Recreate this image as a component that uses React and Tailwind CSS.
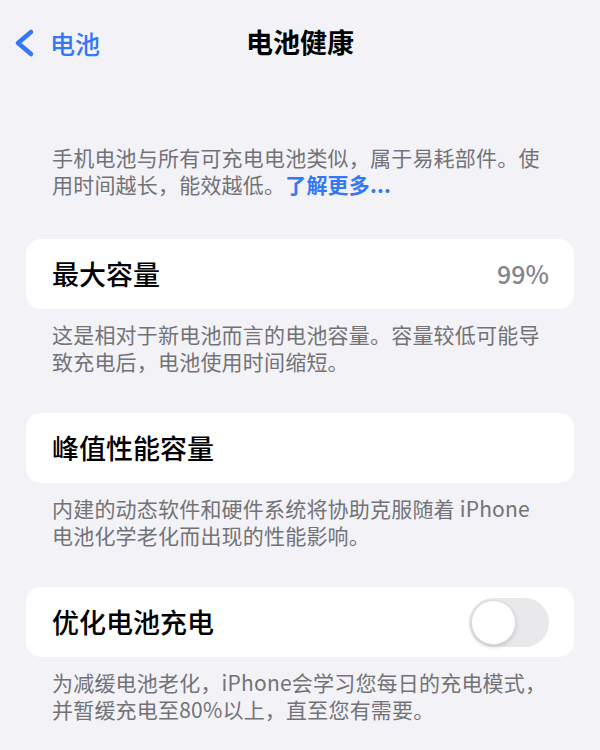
import React from 'react';

const cjk = { fontFamily: '"Noto Sans CJK SC", "Noto Sans", sans-serif' };

function Toggle({ on }) {
  return (
    <div
      className={`flex h-[49px] w-[80px] items-center rounded-full p-[2px] ${
        on ? 'justify-end bg-[#34c759]' : 'justify-start bg-[#e9e9eb]'
      }`}
    >
      <div className="h-[45px] w-[45px] rounded-full border border-[#dcdcde] bg-white shadow-[0_2px_4px_rgba(0,0,0,0.15)]" />
    </div>
  );
}

function Row({ label, value, toggle }) {
  return (
    <div className="flex h-[70px] items-center justify-between rounded-[15px] bg-white pl-[26px] pr-[25px]">
      <span className="text-[27px] font-medium text-black">{label}</span>
      {value && <span className="text-[25px] font-medium text-[#85858a]">{value}</span>}
      {toggle !== undefined && <Toggle on={toggle} />}
    </div>
  );
}

function Caption({ children }) {
  return (
    <p className="mt-[12px] px-[26px] text-[21px] leading-[27px] tracking-[0.2px] text-[#727277]">
      {children}
    </p>
  );
}

export default function App() {
  return (
    <div className="min-h-[750px] w-[600px] overflow-hidden bg-[#f2f2f7]" style={cjk}>
      <header className="relative flex h-[84px] items-center justify-center">
        <a href="#" className="absolute left-[13px] top-[28px] flex items-center gap-[15px] text-[#3478f6]">
          <svg width="22" height="30" viewBox="0 0 22 30" fill="none">
            <path
              d="M18 4L5 15l13 11"
              stroke="currentColor"
              strokeWidth="4.5"
              strokeLinecap="round"
              strokeLinejoin="round"
            />
          </svg>
          <span className="text-[25px] font-medium leading-[30px]">电池</span>
        </a>
        <h1 className="text-[27px] font-semibold text-black">电池健康</h1>
      </header>

      <div className="px-[26px] pt-[60px]">
        <div className="px-[26px] text-[21px] leading-[27px] tracking-[0.2px] text-[#727277]">
          <p>手机电池与所有可充电电池类似，属于易耗部件。使</p>
          <p className="flex">
            <span>用时间越长，能效越低。</span>
            <a href="#" className="font-semibold text-[#3478f6]">了解更多...</a>
          </p>
        </div>

        <div className="mt-[41px]">
          <Row label="最大容量" value="99%" />
          <Caption>这是相对于新电池而言的电池容量。容量较低可能导致充电后，电池使用时间缩短。</Caption>
        </div>

        <div className="mt-[38px]">
          <Row label="峰值性能容量" />
          <Caption>内建的动态软件和硬件系统将协助克服随着 iPhone 电池化学老化而出现的性能影响。</Caption>
        </div>

        <div className="mt-[38px]">
          <Row label="优化电池充电" toggle={false} />
          <Caption>为减缓电池老化，iPhone会学习您每日的充电模式，并暂缓充电至80%以上，直至您有需要。</Caption>
        </div>
      </div>
    </div>
  );
}
